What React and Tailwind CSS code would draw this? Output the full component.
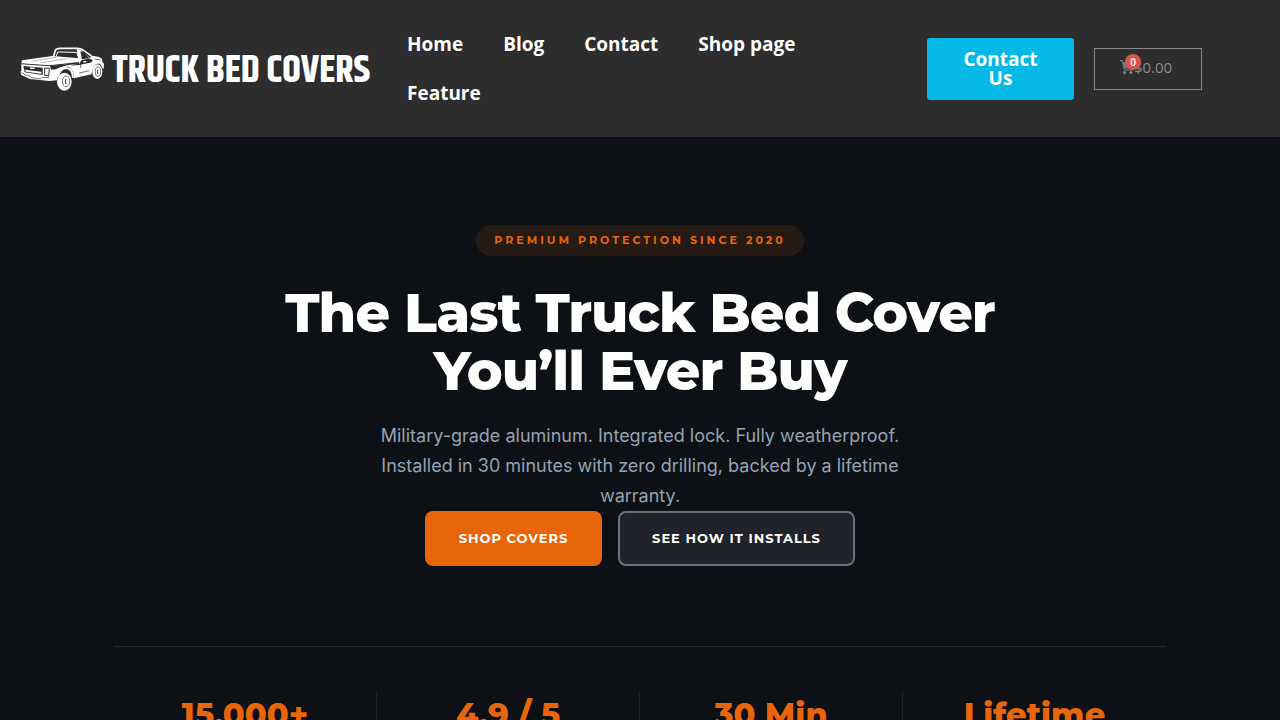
import React from 'react'

const navLinks = ['Home', 'Blog', 'Contact', 'Shop page', 'Feature']

const stats = ['15,000+', '4.9 / 5', '30 Min', 'Lifetime']

const TruckLogo = () => (
    <svg viewBox="30 30 252 135" className="w-[84px] h-[45px] shrink-0" aria-hidden="true">
        {/* bed cover and rails */}
        <path fill="#fff" d="M36 70 L128 57 L208 64 L208 75 L118 85 L34 79 Z" />
        <path fill="none" stroke="#2d2d2d" strokeWidth="1" d="M64 73 L138 61 M94 77 L172 65" />
        {/* cab */}
        <path fill="none" stroke="#fff" strokeWidth="5" strokeLinejoin="round" d="M131 58 L136 40 Q138 35 150 34 L202 34 Q212 34 222 41 L250 61" />
        <path fill="none" stroke="#fff" strokeWidth="3" strokeLinejoin="round" d="M139 57 L143 45 L200 46 L206 63" />
        <path fill="#fff" d="M200 36 L212 38 L240 64 L214 70 L208 82 Z" />
        <path fill="#2d2d2d" d="M211 43 Q219 43 225 49 L237 64 L216 67 Z" />
        {/* hood and door */}
        <path fill="#fff" d="M238 62 L252 57 Q270 59 276 66 L277 74 L282 80 L281 96 L276 92 Q272 78 262 80 Q250 83 247 100 L244 112 L192 124 Q192 96 172 88 Q186 85 208 84 L246 76 Z" />
        <path fill="#2d2d2d" d="M212 72 L244 67 L249 72 L214 80 Z" />
        <path fill="none" stroke="#2d2d2d" strokeWidth="2" d="M211 82 L213 94 M208 108 L238 101 M254 66 L272 69" />
        <path fill="#fff" d="M220 73 l9 -2 v5 l-9 1 Z" />
        {/* tailgate, lights and bumper */}
        <path fill="#fff" d="M34 82 L118 88 L172 82 L200 80 L180 88 Q150 90 141 130 L118 132 L60 126 L34 114 L31 104 L34 102 Z" />
        <path fill="#2d2d2d" d="M40 87 L98 92 L98 114 L44 106 Z" />
        <path fill="#fff" d="M44 98 L94 104 L94 110 L48 104 Z M60 91 l14 1 v4 l-14 -1 Z" />
        <path fill="none" stroke="#2d2d2d" strokeWidth="3" d="M104 93 L118 94 L116 117 L104 115 Z" />
        <path fill="none" stroke="#2d2d2d" strokeWidth="2" d="M34 106 L46 114 L60 117 L64 122 L92 126 L97 121 L118 122" />
        <path fill="#2d2d2d" d="M120 87 L206 77 L206 82 Q176 83 164 87 Q146 91 138 97 L123 98 Z" />
        {/* wheels */}
        <path fill="none" stroke="#fff" strokeWidth="6" d="M144 118 Q150 93 170 93 Q188 95 189 122" />
        <ellipse cx="163" cy="134" rx="22" ry="27" fill="#fff" />
        <ellipse cx="168" cy="133" rx="11" ry="16" fill="none" stroke="#2d2d2d" strokeWidth="2" />
        <path fill="none" stroke="#2d2d2d" strokeWidth="3" d="M168 126 Q164 133 168 141" />
        <ellipse cx="262" cy="104" rx="15" ry="22" fill="#fff" />
        <ellipse cx="264" cy="104" rx="8" ry="14" fill="none" stroke="#2d2d2d" strokeWidth="2" />
        <path fill="none" stroke="#2d2d2d" strokeWidth="3" d="M264 98 Q261 104 264 111" />
    </svg>
)

const CartIcon = () => (
    <svg viewBox="0 0 14 14" className="size-[14px]" aria-hidden="true">
        <path fill="none" stroke="#7d8389" d="M0 .5 H2.300 L4.500 10 H12.500" />
        <path fill="#6b7885" d="M2.500 2 H14 L13 8.500 H4 Z" />
        <circle cx="4.500" cy="12.500" r="1.500" fill="#7d8389" />
        <circle cx="11" cy="12.500" r="1.500" fill="#7d8389" />
    </svg>
)

const Header = () => (
    <header className="flex items-center gap-5 bg-[#2d2d2d] pl-5 pr-[78px] pt-5 pb-[19px] font-['Open_Sans',sans-serif]">
        <a href="#" className="flex items-center gap-2 w-[347px] shrink-0 text-white">
            <TruckLogo />
            <span className="whitespace-nowrap pt-1 text-[38px] leading-10 font-bold font-['Khand','Saira_Extra_Condensed','Barlow_Condensed','Oswald',sans-serif]">TRUCK BED COVERS</span>
        </a>
        <nav className="flex flex-1 flex-wrap">
            {navLinks.map(link => (
                <a key={link} href="#" className="px-5 text-[19px] leading-[49px] font-bold text-white">{link}</a>
            ))}
        </nav>
        <a href="#" className="w-[147px] shrink-0 rounded-[3px] bg-[#05b9e6] px-6 py-3 text-center text-[19px] leading-[19px] font-bold text-white">Contact Us</a>
        <a href="#" className="relative flex w-[108px] h-[42px] shrink-0 items-center justify-center border border-[#888] pr-1 pb-1 text-[15px] text-[#888c91]">
            <CartIcon />
            <span>$0.00</span>
            <span className="absolute left-[30px] top-[5px] flex size-4 items-center justify-center rounded-full bg-[#d9534f] text-[10px] font-semibold text-white">0</span>
        </a>
    </header>
)

const Hero = () => (
    <section className="flex flex-col items-center px-6 pt-[88px] text-center">
        <span className="rounded-full bg-[#261a15] px-[18px] py-2 text-[11px] leading-[15px] font-bold uppercase tracking-[3px] text-[#e8650a]">Premium Protection Since 2020</span>
        <h1 className="mt-7 max-w-[760px] text-[54px] leading-[58px] font-extrabold tracking-[-1px] text-white">The Last Truck Bed Cover You’ll Ever Buy</h1>
        <p className="mt-[21px] max-w-[560px] text-[18px] leading-[30px] text-[#94a3b3] font-['Inter',sans-serif]">Military-grade aluminum. Integrated lock. Fully weatherproof. Installed in 30 minutes with zero drilling, backed by a lifetime warranty.</p>
        <div className="flex gap-4 text-[13px] font-bold uppercase tracking-[1px] text-white">
            <button className="h-[55px] w-[177px] rounded-lg bg-[#e8650a] uppercase">Shop Covers</button>
            <button className="h-[55px] w-[237px] rounded-lg border-2 border-[#6d7074] bg-[#202329] uppercase">See How It Installs</button>
        </div>
    </section>
)

const Stats = () => (
    <section className="mx-auto mt-20 grid w-full max-w-[1052px] grid-cols-4 border-t border-[#25282c] pt-11">
        {stats.map(stat => (
            <div key={stat} className="border-r border-[#1d2024] text-center text-[32px] leading-[48px] font-extrabold text-[#e8650a] last:border-r-0">{stat}</div>
        ))}
    </section>
)

const App = () => (
    <div className="min-h-screen bg-[#0d1014] font-['Montserrat','Inter',sans-serif]">
        <Header />
        <Hero />
        <Stats />
    </div>
)

export default App
